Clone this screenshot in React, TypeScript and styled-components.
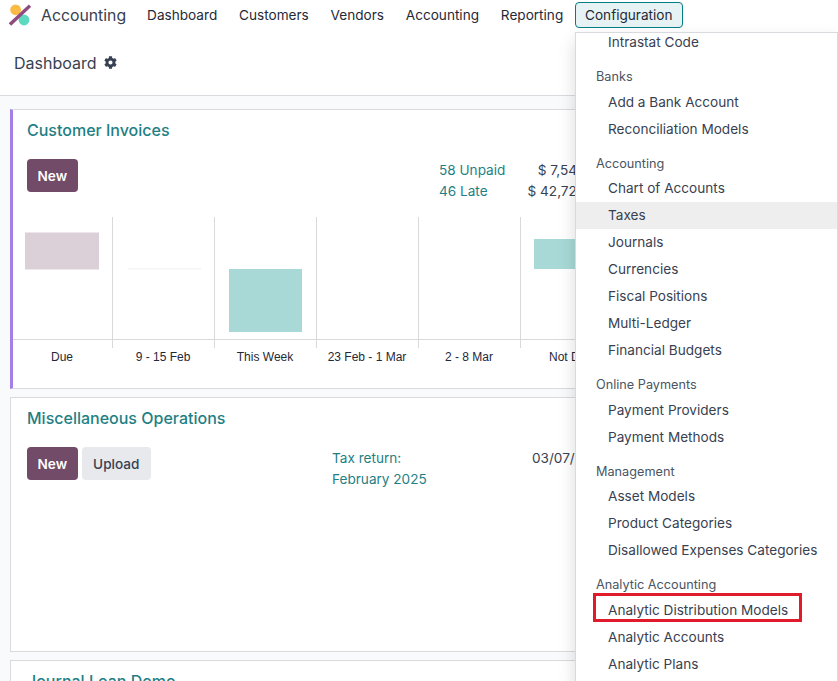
import React from 'react';
import styled, { createGlobalStyle } from 'styled-components';
import { FaCog } from 'react-icons/fa';

const GlobalStyle = createGlobalStyle`
  html, body {
    margin: 0;
    padding: 0;
    background: #fff;
  }
  body {
    font-family: Inter, "Noto Sans", sans-serif;
    font-size: 13.6px;
    color: #374151;
  }
`;

const Page = styled.div`
  position: relative;
  width: 838px;
  height: 681px;
  overflow: hidden;
  background: #f9fafb;
`;

const Navbar = styled.nav`
  display: flex;
  align-items: center;
  height: 30px;
  padding-left: 9px;
  background: #fff;
`;

const Brand = styled.div`
  display: flex;
  align-items: center;
  gap: 10px;
  margin-right: 11px;
  font-size: 15.8px;
  color: #374151;
`;

const NavItem = styled.div<{ $active?: boolean }>`
  height: 26px;
  line-height: 24px;
  box-sizing: border-box;
  padding: 0 9px;
  margin-right: 1.8px;
  border: 1px solid ${({ $active }) => ($active ? '#017e84' : 'transparent')};
  border-radius: 4px;
  background: ${({ $active }) => ($active ? '#e6f2f3' : 'transparent')};
  color: #1f2937;
`;

const ControlPanel = styled.header`
  display: flex;
  align-items: center;
  gap: 7px;
  height: 66px;
  padding: 0 14px;
  box-sizing: border-box;
  background: #fff;
  border-bottom: 1px solid #d8dadd;
  font-size: 16px;
  color: #374151;
`;

const Content = styled.main`
  display: flex;
  flex-direction: column;
  gap: 8px;
  padding: 13px 10px 0;
`;

const Card = styled.section<{ $accent?: boolean; $height: number }>`
  box-sizing: border-box;
  height: ${({ $height }) => $height}px;
  flex-shrink: 0;
  background: #fff;
  border: 1px solid #d8dadd;
  border-left: ${({ $accent }) => ($accent ? '3px solid #a57fe6' : '1px solid #d8dadd')};
  padding-top: 10px;
`;

const Title = styled.h2<{ $inset: number }>`
  margin: 0 0 18px ${({ $inset }) => $inset}px;
  font-size: 16px;
  line-height: 21px;
  font-weight: 500;
  color: #1f7f84;
`;

const ActionRow = styled.div<{ $inset: number; $leftWidth: number }>`
  display: grid;
  grid-template-columns: ${({ $leftWidth }) => $leftWidth}px 1fr;
  padding-left: ${({ $inset }) => $inset}px;
`;

const Buttons = styled.div`
  display: flex;
  gap: 4px;
`;

const Button = styled.button<{ $primary?: boolean }>`
  height: 33px;
  padding: 0 ${({ $primary }) => ($primary ? '10.5px' : '11.5px')};
  border: 0;
  border-radius: 4px;
  font-family: inherit;
  font-size: 13.6px;
  font-weight: ${({ $primary }) => ($primary ? 600 : 500)};
  color: ${({ $primary }) => ($primary ? '#fff' : '#374151')};
  background: ${({ $primary }) => ($primary ? '#714b67' : '#e7e9ed')};
`;

const Stats = styled.div<{ $valueColumn: number; $top: number }>`
  display: grid;
  grid-template-columns: ${({ $valueColumn }) => $valueColumn}px 1fr;
  grid-auto-rows: 21px;
  line-height: 21px;
  padding-top: ${({ $top }) => $top}px;
`;

const StatLink = styled.div`
  color: #1f7f84;
`;

const StatValue = styled.div<{ $width: number }>`
  width: ${({ $width }) => $width}px;
  text-align: right;
  color: #374151;
  white-space: nowrap;
`;

const ChartWrap = styled.div`
  margin-top: 15px;
  line-height: 0;
`;

const AxisLabels = styled.div`
  display: grid;
  grid-template-columns: 100px repeat(7, 102px);
  margin: 2px 0 0 -1px;
`;

const AxisLabel = styled.div`
  text-align: center;
  font-family: "Liberation Sans", Arial, sans-serif;
  font-size: 12px;
  line-height: 14px;
  color: #1f2937;
  white-space: nowrap;
`;

const Menu = styled.div`
  position: absolute;
  left: 575px;
  top: 32px;
  right: 0;
  bottom: -4px;
  box-sizing: border-box;
  overflow: hidden;
  background: #fff;
  border: 1px solid #d8dadd;
  box-shadow: 0 8px 16px rgba(0, 0, 0, 0.15);
`;

const MenuInner = styled.div`
  margin-top: -4px;
`;

const MenuGroup = styled.div`
  padding-bottom: 8px;
`;

const MenuHeader = styled.div`
  height: 24.6px;
  line-height: 26px;
  padding-left: 20px;
  font-size: 12.7px;
  color: #4b5563;
`;

const MenuItem = styled.div<{ $hover?: boolean; $marked?: boolean }>`
  position: relative;
  height: 27px;
  line-height: 27px;
  padding-left: 32px;
  color: #374151;
  background: ${({ $hover }) => ($hover ? '#eeeeee' : 'transparent')};
  white-space: nowrap;

  ${({ $marked }) =>
    $marked &&
    `&::after {
      content: '';
      position: absolute;
      left: 17px;
      top: -4px;
      width: 209px;
      height: 29px;
      box-sizing: border-box;
      border: 3px solid #e01b2b;
    }`}
`;

const Logo = () => (
  <svg width="22" height="22" viewBox="0 0 22 22">
    <circle cx="6.6" cy="5.8" r="5.4" fill="#fbb945" />
    <circle cx="15" cy="16" r="5.4" fill="#5ed9c0" />
    <path d="M21 1.7 L1 20.5" stroke="#8f4a7e" strokeWidth="3.4" />
  </svg>
);

const Chart = () => (
  <svg width="720" height="131" viewBox="0 0 720 131">
    {[100, 202, 304, 406, 508, 610].map((x) => (
      <line key={x} x1={x - 0.5} x2={x - 0.5} y1="0" y2="131" stroke="#d9d9d9" />
    ))}
    <line x1="0" x2="720" y1="122.5" y2="122.5" stroke="#d9d9d9" />
    <rect x="12" y="15.5" width="74" height="37" fill="#dbd0d8" />
    <rect x="115" y="51" width="73" height="1.5" fill="#f5f3f4" />
    <rect x="216" y="52" width="73" height="63" fill="#a8d9d6" />
    <rect x="521" y="22" width="74" height="30" fill="#a8d9d6" />
  </svg>
);

const nav = ['Dashboard', 'Customers', 'Vendors', 'Accounting', 'Reporting'];
const axis = ['Due', '9 - 15 Feb', 'This Week', '23 Feb - 1 Mar', '2 - 8 Mar', 'Not Due'];

const groups: { title?: string; items: string[] }[] = [
  { items: ['Intrastat Code'] },
  { title: 'Banks', items: ['Add a Bank Account', 'Reconciliation Models'] },
  {
    title: 'Accounting',
    items: ['Chart of Accounts', 'Taxes', 'Journals', 'Currencies', 'Fiscal Positions', 'Multi-Ledger', 'Financial Budgets'],
  },
  { title: 'Online Payments', items: ['Payment Providers', 'Payment Methods'] },
  { title: 'Management', items: ['Asset Models', 'Product Categories', 'Disallowed Expenses Categories'] },
  { title: 'Analytic Accounting', items: ['Analytic Distribution Models', 'Analytic Accounts', 'Analytic Plans'] },
];

const App: React.FC = () => {
  return (
    <Page>
      <GlobalStyle />
      <Navbar>
        <Brand>
          <Logo />
          Accounting
        </Brand>
        {nav.map((item) => (
          <NavItem key={item}>{item}</NavItem>
        ))}
        <NavItem $active>Configuration</NavItem>
      </Navbar>
      <ControlPanel>
        Dashboard
        <FaCog size={13} />
      </ControlPanel>
      <Content>
        <Card $accent $height={280}>
          <Title $inset={14}>Customer Invoices</Title>
          <ActionRow $inset={14} $leftWidth={412}>
            <Buttons>
              <Button $primary>New</Button>
            </Buttons>
            <Stats $valueColumn={80} $top={1}>
              <StatLink>58 Unpaid</StatLink>
              <StatValue $width={83}>$ 7,544.19</StatValue>
              <StatLink>46 Late</StatLink>
              <StatValue $width={83}>$ 42,722.10</StatValue>
            </Stats>
          </ActionRow>
          <ChartWrap>
            <Chart />
            <AxisLabels>
              {axis.map((label) => (
                <AxisLabel key={label}>{label}</AxisLabel>
              ))}
            </AxisLabels>
          </ChartWrap>
        </Card>
        <Card $height={255}>
          <Title $inset={16}>Miscellaneous Operations</Title>
          <ActionRow $inset={16} $leftWidth={305}>
            <Buttons>
              <Button $primary>New</Button>
              <Button>Upload</Button>
            </Buttons>
            <Stats $valueColumn={200} $top={1}>
              <StatLink>Tax return:</StatLink>
              <StatValue $width={76}>03/07/2025</StatValue>
              <StatLink>February 2025</StatLink>
            </Stats>
          </ActionRow>
        </Card>
        <Card $height={120}>
          <Title $inset={16}>Journal Loan Demo</Title>
        </Card>
      </Content>
      <Menu>
        <MenuInner>
          {groups.map((group, i) => (
            <MenuGroup key={i}>
              {group.title && <MenuHeader>{group.title}</MenuHeader>}
              {group.items.map((item) => (
                <MenuItem key={item} $hover={item === 'Taxes'} $marked={item === 'Analytic Distribution Models'}>
                  {item}
                </MenuItem>
              ))}
            </MenuGroup>
          ))}
        </MenuInner>
      </Menu>
    </Page>
  );
};

export default App;
